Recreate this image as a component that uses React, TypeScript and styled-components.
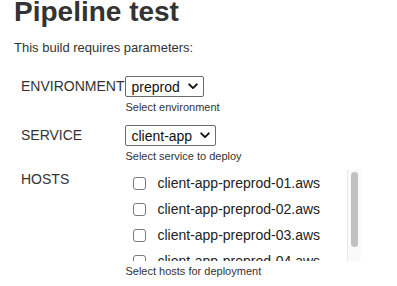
import React, {FC} from "react";
import styled, {createGlobalStyle} from "styled-components";

const GlobalStyle = createGlobalStyle`
  body {
    margin: 0;
    background: #ffffff;
    color: #333333;
    font-family: "Liberation Sans", Arial, Helvetica, sans-serif;
  }
`

interface Param {
  name: string
  help: string
  options?: string[]
  hosts?: string[]
}

const params: Param[] = [
  {name: "ENVIRONMENT", help: "Select environment", options: ["preprod", "prod"]},
  {name: "SERVICE", help: "Select service to deploy", options: ["client-app", "api"]},
  {
    name: "HOSTS",
    help: "Select hosts for deployment",
    hosts: [
      "client-app-preprod-01.aws",
      "client-app-preprod-02.aws",
      "client-app-preprod-03.aws",
      "client-app-preprod-04.aws",
    ],
  },
]

const Chevron: FC = () => (
  <ChevronIcon width="10" height="7" viewBox="0 0 10 7">
    <path d="M1.2 1.3 L5 5.1 L8.8 1.3" fill="none" stroke="#111" strokeWidth="1.9" strokeLinecap="round" strokeLinejoin="round"/>
  </ChevronIcon>
)

const ChoiceField: FC<{options: string[]}> = ({options}) => (
  <SelectWrap>
    <Select defaultValue={options[0]}>
      {options.map(o => <option key={o}>{o}</option>)}
    </Select>
    <Chevron/>
  </SelectWrap>
)

const HostList: FC<{hosts: string[]}> = ({hosts}) => (
  <ListBox>
    <ListViewport>
      {hosts.map(h => (
        <HostRow key={h}>
          <Check type="checkbox"/>
          <span>{h}</span>
        </HostRow>
      ))}
    </ListViewport>
    <ScrollTrack>
      <ScrollThumb/>
    </ScrollTrack>
  </ListBox>
)

export default function App() {
  return (
    <Page>
      <GlobalStyle/>
      <Title>Pipeline test</Title>
      <Intro>This build requires parameters:</Intro>
      <ParamGrid>
        {params.map(p => (
          <React.Fragment key={p.name}>
            <Label list={!!p.hosts}>{p.name}</Label>
            <Field>
              {p.options && <ChoiceField options={p.options}/>}
              {p.hosts && <HostList hosts={p.hosts}/>}
              <Help>{p.help}</Help>
            </Field>
          </React.Fragment>
        ))}
      </ParamGrid>
    </Page>
  )
}

const Page = styled.div`
  padding: 0 14px;
`

const Title = styled.h1`
  margin: 0;
  font-size: 28px;
  line-height: 24px;
  font-weight: bold;
  color: #333333;
`

const Intro = styled.p`
  margin: 16px 0 0;
  font-size: 13px;
  line-height: 16px;
`

const ParamGrid = styled.div`
  display: grid;
  grid-template-columns: auto 1fr;
  column-gap: 1px;
  row-gap: 10px;
  margin-top: 19px;
  padding-left: 7px;
`

const Label = styled.div<{list: boolean}>`
  font-size: 14px;
  line-height: 20px;
  margin-top: ${props => props.list ? -4 : 1}px;
`

const Field = styled.div`
  display: flex;
  flex-direction: column;
  align-items: flex-start;
`

const SelectWrap = styled.div`
  position: relative;
  display: inline-block;
  margin-top: 1px;
`

const Select = styled.select`
  appearance: none;
  -webkit-appearance: none;
  height: 21px;
  padding: 0 23px 0 5px;
  border: 1px solid #6b6b6b;
  border-radius: 2px;
  background: #ffffff;
  color: #111111;
  font-family: "Liberation Sans", Arial, sans-serif;
  font-size: 14px;
  outline: none;
`

const ChevronIcon = styled.svg`
  position: absolute;
  right: 6px;
  top: 7px;
  pointer-events: none;
`

const Help = styled.div`
  margin-top: 4px;
  font-size: 11px;
  line-height: 13px;
  color: #333333;
`

const ListBox = styled.div`
  display: flex;
  width: 235px;
  height: 91px;
  margin-top: -3px;
  margin-left: 1px;
`

const ListViewport = styled.div`
  flex: 1;
  overflow: hidden;
  padding-left: 7px;
`

const ScrollTrack = styled.div`
  width: 14px;
  box-sizing: border-box;
  padding: 2px 3px 0 3px;
  background: #fafafa;
  border-left: 1px solid #e8e8e8;
`

const ScrollThumb = styled.div`
  width: 7px;
  height: 75px;
  border-radius: 4px;
  background: #c1c1c1;
`

const HostRow = styled.label`
  display: flex;
  align-items: center;
  gap: 11px;
  height: 26px;
  font-size: 14px;
  color: #222222;
  white-space: nowrap;
`

const Check = styled.input`
  appearance: none;
  -webkit-appearance: none;
  width: 13px;
  height: 13px;
  margin: 0;
  border: 1px solid #7a7a7a;
  border-radius: 3px;
  background: #ffffff;
`
